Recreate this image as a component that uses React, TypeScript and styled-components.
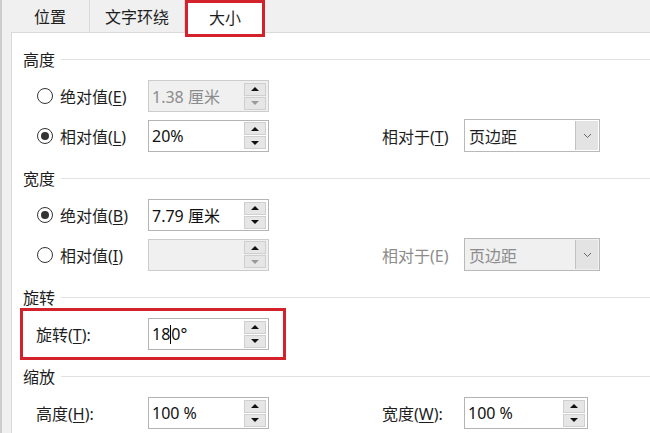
import React from "react";
import styled, { createGlobalStyle } from "styled-components";

const GlobalStyle = createGlobalStyle`
  html, body {
    margin: 0;
    padding: 0;
  }
  body {
    font-family: "Noto Sans", "Noto Sans CJK SC", sans-serif;
    color: #1e1e1e;
  }
`;

const Frame = styled.div`
  width: 650px;
  height: 433px;
  overflow: hidden;
  box-sizing: border-box;
  background: #f0f0f0;
  border-left: 2px solid #cdcdcd;
  display: flex;
  flex-direction: column;
`;

const TabStrip = styled.div`
  display: flex;
  align-items: flex-start;
  height: 32px;
  padding-left: 9px;
  position: relative;
  z-index: 1;
`;

const Tab = styled.div<{ $width: number; $active?: boolean }>`
  box-sizing: border-box;
  width: ${(p) => p.$width}px;
  display: flex;
  align-items: center;
  justify-content: center;
  font-size: 16px;
  color: #1e1e1e;
  height: ${(p) => (p.$active ? "37px" : "32px")};
  background: ${(p) => (p.$active ? "#fff" : "transparent")};
  border: ${(p) => (p.$active ? "3px solid #d4222c" : "none")};
  border-right: ${(p) =>
    p.$active ? "3px solid #d4222c" : "1px solid #dadada"};
  padding-bottom: ${(p) => (p.$active ? "3px" : "0")};
  &:last-child {
    border-right: ${(p) => (p.$active ? "3px solid #d4222c" : "none")};
  }
`;

const Panel = styled.div`
  flex: 1;
  margin-left: 9px;
  background: #fff;
  border-left: 1px solid #d9d9d9;
  border-top: 1px solid #d9d9d9;
  padding: 16px 0 0 11px;
  display: flex;
  flex-direction: column;
`;

const Section = styled.div<{ $top?: number }>`
  display: flex;
  flex-direction: column;
  margin-top: ${(p) => p.$top ?? 0}px;
`;

const Header = styled.div`
  height: 20px;
  display: flex;
  align-items: center;
  gap: 6px;
  font-size: 16px;
  &::after {
    content: "";
    flex: 1;
    height: 1px;
    background: #e2e2e2;
  }
`;

const Body = styled.div<{ $gap?: number }>`
  display: flex;
  flex-direction: column;
  gap: 7px;
  margin-top: ${(p) => p.$gap ?? 11}px;
  padding-left: 13px;
`;

const Row = styled.div`
  display: grid;
  grid-template-columns: 112px 121px 113px 82px auto;
  align-items: center;
  height: 32px;
`;

const Label = styled.div<{ $disabled?: boolean }>`
  font-size: 16px;
  white-space: nowrap;
  color: ${(p) => (p.$disabled ? "#8c8c8c" : "#1e1e1e")};
  display: flex;
  align-items: center;
  gap: 7px;
`;

const Radio = styled.span<{ $checked?: boolean }>`
  box-sizing: border-box;
  width: 16px;
  height: 16px;
  margin-left: 1px;
  border-radius: 50%;
  border: 1px solid #333;
  background: #fff;
  display: flex;
  align-items: center;
  justify-content: center;
  &::after {
    content: "";
    width: 8px;
    height: 8px;
    border-radius: 50%;
    background: ${(p) => (p.$checked ? "#333" : "transparent")};
  }
`;

const Key = styled.span`
  text-decoration: underline;
  text-underline-offset: 2px;
`;

const SpinBox = styled.div<{ $disabled?: boolean; $width?: number }>`
  box-sizing: border-box;
  width: ${(p) => p.$width ?? 121}px;
  height: 32px;
  border: 1px solid ${(p) => (p.$disabled ? "#cccccc" : "#b4b4b4")};
  background: ${(p) => (p.$disabled ? "#f0f0f0" : "#fff")};
  display: flex;
  align-items: center;
  padding-left: 3px;
`;

const Value = styled.div<{ $disabled?: boolean }>`
  flex: 1;
  font-size: 16px;
  white-space: nowrap;
  color: ${(p) => (p.$disabled ? "#8c8c8c" : "#111")};
  display: flex;
  align-items: center;
`;

const Caret = styled.span`
  display: inline-block;
  width: 1px;
  height: 19px;
  background: #000;
`;

const Spinner = styled.div`
  display: flex;
  flex-direction: column;
  gap: 1px;
  width: 22px;
  margin-right: 2px;
`;

const SpinBtn = styled.div`
  box-sizing: border-box;
  height: 13px;
  border: 1px solid #cfcfcf;
  background: #e6e6e6;
  display: flex;
  align-items: center;
  justify-content: center;
`;

const Arrow = styled.span<{ $down?: boolean; $muted?: boolean }>`
  width: 0;
  height: 0;
  border-left: 4px solid transparent;
  border-right: 4px solid transparent;
  ${(p) =>
    p.$down
      ? `border-top: 4px solid ${p.$muted ? "#9a9a9a" : "#111"};`
      : `border-bottom: 4px solid #111;`}
`;

const Select = styled.div<{ $disabled?: boolean }>`
  box-sizing: border-box;
  width: 136px;
  height: 33px;
  border: 1px solid #b9b9b9;
  background: ${(p) => (p.$disabled ? "#f0f0f0" : "#fff")};
  display: flex;
  align-items: stretch;
  padding: 1px 1px 1px 4px;
`;

const SelectText = styled.div<{ $disabled?: boolean }>`
  flex: 1;
  display: flex;
  align-items: center;
  font-size: 16px;
  color: ${(p) => (p.$disabled ? "#8c8c8c" : "#1e1e1e")};
`;

const SelectBtn = styled.div`
  width: 22px;
  background: #e3e3e3;
  border-left: 1px solid #c3c3c3;
  display: flex;
  align-items: center;
  justify-content: center;
`;

const Highlight = styled.div`
  box-sizing: border-box;
  width: 266px;
  margin-left: -16px;
  border: 3px solid #d4222c;
  padding: 7px 0 7px 13px;
`;

function Spin({
  value,
  disabled,
  width,
}: {
  value: React.ReactNode;
  disabled?: boolean;
  width?: number;
}) {
  return (
    <SpinBox $disabled={disabled} $width={width}>
      <Value $disabled={disabled}>{value}</Value>
      <Spinner>
        <SpinBtn>
          <Arrow />
        </SpinBtn>
        <SpinBtn>
          <Arrow $down $muted={disabled} />
        </SpinBtn>
      </Spinner>
    </SpinBox>
  );
}

function Dropdown({ value, disabled }: { value: string; disabled?: boolean }) {
  return (
    <Select $disabled={disabled}>
      <SelectText $disabled={disabled}>{value}</SelectText>
      <SelectBtn>
        <svg width="9" height="6" viewBox="0 0 9 6">
          <polyline
            points="1,1 4.5,4.5 8,1"
            fill="none"
            stroke="#666"
            strokeWidth="1"
          />
        </svg>
      </SelectBtn>
    </Select>
  );
}

export default function App() {
  return (
    <>
      <GlobalStyle />
      <Frame>
        <TabStrip>
          <Tab $width={79}>位置</Tab>
          <Tab $width={95}>文字环绕</Tab>
          <Tab $width={80} $active>
            大小
          </Tab>
        </TabStrip>
        <Panel>
          <Section>
            <Header>高度</Header>
            <Body>
              <Row>
                <Label>
                  <Radio />
                  <span>
                    绝对值(<Key>E</Key>)
                  </span>
                </Label>
                <Spin value="1.38 厘米" disabled />
              </Row>
              <Row>
                <Label>
                  <Radio $checked />
                  <span>
                    相对值(<Key>L</Key>)
                  </span>
                </Label>
                <Spin value="20%" />
                <span />
                <Label>
                  <span>
                    相对于(<Key>T</Key>)
                  </span>
                </Label>
                <Dropdown value="页边距" />
              </Row>
            </Body>
          </Section>

          <Section $top={17}>
            <Header>宽度</Header>
            <Body>
              <Row>
                <Label>
                  <Radio $checked />
                  <span>
                    绝对值(<Key>B</Key>)
                  </span>
                </Label>
                <Spin value="7.79 厘米" />
              </Row>
              <Row>
                <Label>
                  <Radio />
                  <span>
                    相对值(<Key>I</Key>)
                  </span>
                </Label>
                <Spin value="" disabled />
                <span />
                <Label $disabled>相对于(E)</Label>
                <Dropdown value="页边距" disabled />
              </Row>
            </Body>
          </Section>

          <Section $top={17}>
            <Header>旋转</Header>
            <Body $gap={1}>
              <Highlight>
                <Row>
                  <Label>
                    <span>
                      旋转(<Key>T</Key>):
                    </span>
                  </Label>
                  <Spin
                    value={
                      <>
                        18
                        <Caret />
                        0°
                      </>
                    }
                  />
                </Row>
              </Highlight>
            </Body>
          </Section>

          <Section $top={6}>
            <Header>缩放</Header>
            <Body>
              <Row>
                <Label>
                  <span>
                    高度(<Key>H</Key>):
                  </span>
                </Label>
                <Spin value="100 %" />
                <span />
                <Label>
                  <span>
                    宽度(<Key>W</Key>):
                  </span>
                </Label>
                <Spin value="100 %" width={124} />
              </Row>
            </Body>
          </Section>
        </Panel>
      </Frame>
    </>
  );
}
